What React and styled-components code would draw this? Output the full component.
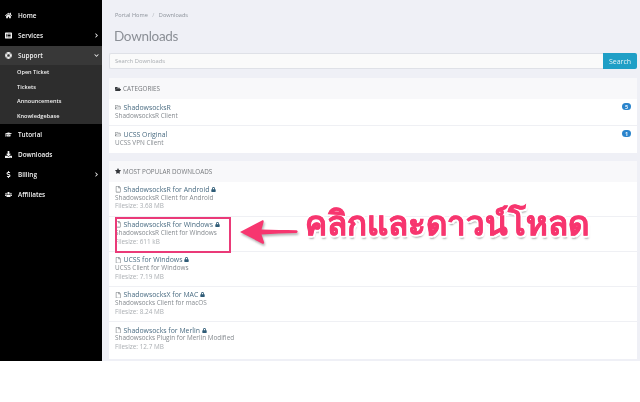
import React from "react";
import styled, { createGlobalStyle } from "styled-components";
import {
  FaHome,
  FaListAlt,
  FaLifeRing,
  FaGraduationCap,
  FaDownload,
  FaDollarSign,
  FaUsers,
  FaChevronRight,
  FaChevronDown,
  FaFolderOpen,
  FaRegFolderOpen,
  FaRegFile,
  FaLock,
  FaStar,
} from "react-icons/fa";

const categories = [
  { name: "ShadowsocksR", desc: "ShadowsocksR Client", count: 5 },
  { name: "UCSS Original", desc: "UCSS VPN Client", count: 1 },
];

const downloads = [
  { name: "ShadowsocksR for Android", desc: "ShadowsocksR Client for Android", size: "3.68 MB" },
  { name: "ShadowsocksR for Windows", desc: "ShadowsocksR Client for Windows", size: "611 kB" },
  { name: "UCSS for Windows", desc: "UCSS Client for Windows", size: "7.19 MB" },
  { name: "ShadowsocksX for MAC", desc: "Shadowsocks Client for macOS", size: "8.24 MB" },
  { name: "Shadowsocks for Merlin", desc: "Shadowsocks Plugin for Merlin Modified", size: "12.7 MB" },
];

const App = () => {
  return (
    <>
      <GlobalStyle />
      <Page>
        <Sidebar>
          <NavItem><NavIcon><FaHome /></NavIcon>Home</NavItem>
          <NavItem>
            <NavIcon><FaListAlt /></NavIcon>Services
            <Caret><FaChevronRight /></Caret>
          </NavItem>
          <NavItem $active>
            <NavIcon><FaLifeRing /></NavIcon>Support
            <Caret><FaChevronDown /></Caret>
          </NavItem>
          <SubMenu>
            <SubItem>Open Ticket</SubItem>
            <SubItem>Tickets</SubItem>
            <SubItem>Announcements</SubItem>
            <SubItem>Knowledgebase</SubItem>
          </SubMenu>
          <NavItem><NavIcon><FaGraduationCap /></NavIcon>Tutorial</NavItem>
          <NavItem><NavIcon><FaDownload /></NavIcon>Downloads</NavItem>
          <NavItem>
            <NavIcon><FaDollarSign /></NavIcon>Billing
            <Caret><FaChevronRight /></Caret>
          </NavItem>
          <NavItem><NavIcon><FaUsers /></NavIcon>Affiliates</NavItem>
        </Sidebar>

        <Main>
          <Breadcrumb>
            <span>Portal Home</span>
            <Slash>/</Slash>
            <span>Downloads</span>
          </Breadcrumb>
          <Title>Downloads</Title>
          <SearchRow>
            <SearchInput>Search Downloads</SearchInput>
            <SearchButton>Search</SearchButton>
          </SearchRow>

          <Card>
            <CardHeader><FaFolderOpen />CATEGORIES</CardHeader>
            {categories.map((c) => (
              <CategoryRow key={c.name}>
                <div>
                  <RowTitle><GreyIcon><FaRegFolderOpen /></GreyIcon>{c.name}</RowTitle>
                  <RowText>{c.desc}</RowText>
                </div>
                <Badge>{c.count}</Badge>
              </CategoryRow>
            ))}
          </Card>

          <Card $last>
            <CardHeader><FaStar />MOST POPULAR DOWNLOADS</CardHeader>
            {downloads.map((d, i) => (
              <DownloadRow key={d.name}>
                {i === 1 && <Highlight />}
                <RowTitle>
                  <GreyIcon><FaRegFile /></GreyIcon>{d.name}
                  <LockIcon><FaLock /></LockIcon>
                </RowTitle>
                <RowText>{d.desc}</RowText>
                <RowSize>Filesize: {d.size}</RowSize>
              </DownloadRow>
            ))}
          </Card>

          <Callout>
            <ArrowIcon width="60" height="28" viewBox="0 0 60 28">
              <path
                d="M1 14 L23 2.5 C24.5 2 25 3 24.5 4.5 L22.5 11.5 C34 12 46 12 57.5 12.2 C59 12.6 59 14.6 57.5 15 C46 15.4 34 15.6 22.5 16.5 L25 24 C25.5 25.5 24.5 26 23 25.4 Z"
                fill="#f7366f"
              />
            </ArrowIcon>
            <CalloutText>คลิกและดาวน์โหลด</CalloutText>
          </Callout>
        </Main>
      </Page>
    </>
  );
};

const GlobalStyle = createGlobalStyle`
  html, body {
    margin: 0;
    padding: 0;
    background: #fff;
  }
  body {
    font-family: "Open Sans", "Liberation Sans", sans-serif;
  }
`;

const Page = styled.div`
  display: flex;
  width: 640px;
  height: 361px;
  overflow: hidden;
  filter: blur(0.3px);
`;

const Sidebar = styled.nav`
  width: 102px;
  flex-shrink: 0;
  padding-top: 5.5px;
  background: #000;
  box-sizing: border-box;
`;

const NavItem = styled.div`
  display: flex;
  align-items: center;
  height: ${(p) => (p.$active ? 19 : 20)}px;
  padding: 0 3px 0 2px;
  background: ${(p) => (p.$active ? "#383838" : "transparent")};
  color: #f2f2f2;
  font-size: 6.4px;
  font-weight: 600;
`;

const NavIcon = styled.span`
  display: flex;
  justify-content: center;
  width: 12px;
  margin-right: 4px;
  font-size: 7px;
`;

const Caret = styled.span`
  display: flex;
  margin-left: auto;
  font-size: 5px;
`;

const SubMenu = styled.div`
  padding: 0 0 1px;
  background: #2d2d2d;
`;

const SubItem = styled.div`
  display: flex;
  align-items: center;
  height: 14.7px;
  padding-left: 17px;
  color: #f2f2f2;
  font-size: 5.6px;
  font-weight: 600;
`;

const Main = styled.main`
  position: relative;
  flex: 1;
  padding: 10px 3px 0 7px;
  background: #eff0f6;
  box-sizing: border-box;
`;

const Breadcrumb = styled.div`
  display: flex;
  height: 9px;
  padding-left: 6px;
  align-items: center;
  color: #8d939b;
  font-size: 5.6px;
`;

const Slash = styled.span`
  margin: 0 4.5px;
  color: #b5b9bf;
`;

const Title = styled.h1`
  margin: 6.5px 0 7.5px 5px;
  height: 20px;
  color: #8b8f96;
  font-family: "Lato", "Open Sans", sans-serif;
  font-size: 13.5px;
  font-weight: 400;
  letter-spacing: -0.3px;
  line-height: 20px;
`;

const SearchRow = styled.div`
  display: flex;
  height: 16px;
  margin-bottom: 9px;
`;

const SearchInput = styled.div`
  display: flex;
  flex: 1;
  align-items: center;
  padding-left: 5px;
  background: #fafafa;
  border: 1px solid #dfe1e7;
  border-right: 0;
  border-radius: 2px 0 0 2px;
  color: #a9adb2;
  font-size: 5.8px;
`;

const SearchButton = styled.div`
  display: flex;
  align-items: center;
  justify-content: center;
  width: 34px;
  background: #1f9fc6;
  border-radius: 0 2px 2px 0;
  color: #e4f3f8;
  font-size: 7px;
`;

const Card = styled.section`
  margin-bottom: ${(p) => (p.$last ? 0 : "7.5px")};
  background: #fff;
  padding-bottom: ${(p) => (p.$last ? "2px" : 0)};
`;

const CardHeader = styled.div`
  display: flex;
  align-items: center;
  gap: 2px;
  height: 21px;
  padding-left: 6px;
  background: #f8f8fa;
  color: #75787c;
  font-size: 6.3px;
  svg {
    font-size: 6px;
    color: #33363a;
  }
`;

const CategoryRow = styled.div`
  display: flex;
  justify-content: space-between;
  height: 27px;
  padding: 3px 6px 0;
  border-bottom: 1px solid #eff0f4;
  box-sizing: border-box;
  &:last-child {
    border-bottom: 0;
  }
`;

const DownloadRow = styled.div`
  position: relative;
  height: 35.2px;
  padding: 2.5px 6px 0;
  border-bottom: 1px solid #eff0f4;
  box-sizing: border-box;
  &:last-child {
    border-bottom: 0;
  }
`;

const Highlight = styled.div`
  position: absolute;
  top: 0.5px;
  left: 5.5px;
  width: 116px;
  height: 35.5px;
  border: 2px solid #ea3a78;
  box-sizing: border-box;
`;

const RowTitle = styled.div`
  display: flex;
  align-items: center;
  height: 8.7px;
  margin-top: 1px;
  color: #4a6c82;
  font-size: 6.9px;
  font-weight: 500;
`;

const GreyIcon = styled.span`
  display: flex;
  margin-right: 2px;
  color: #7d8286;
  font-size: 6.4px;
`;

const LockIcon = styled.span`
  display: flex;
  margin-left: 2px;
  color: #2f5c77;
  font-size: 5px;
`;

const RowText = styled.div`
  height: 8.7px;
  color: #858a8f;
  font-size: 6.4px;
  line-height: 8.7px;
`;

const RowSize = styled(RowText)`
  color: #aaaeb2;
`;

const Badge = styled.span`
  display: flex;
  align-items: center;
  justify-content: center;
  width: 9px;
  height: 7px;
  margin-top: 1px;
  background: #2a84cc;
  border-radius: 4px;
  color: #e8f2fa;
  font-size: 5.5px;
  font-weight: 700;
`;

const Callout = styled.div`
  position: absolute;
  top: 201px;
  left: 137px;
  display: flex;
  align-items: flex-start;
  gap: 6px;
`;

const ArrowIcon = styled.svg`
  margin-top: 17px;
  filter: drop-shadow(1px 2px 1px rgba(0, 0, 0, 0.3));
`;

const CalloutText = styled.div`
  color: #f7366f;
  font-family: "Noto Sans", "DejaVu Sans", sans-serif;
  font-size: 33px;
  font-weight: 700;
  line-height: 44px;
  white-space: nowrap;
  -webkit-text-stroke: 0.6px #f7366f;
  text-shadow: -2px 0 #fff, 2px 0 #fff, 0 -2px #fff, 0 2px #fff, -1.5px -1.5px #fff,
    1.5px -1.5px #fff, -1.5px 1.5px #fff, 1.5px 1.5px #fff, 1px 3px 2px rgba(0, 0, 0, 0.45);
`;

export default App;
